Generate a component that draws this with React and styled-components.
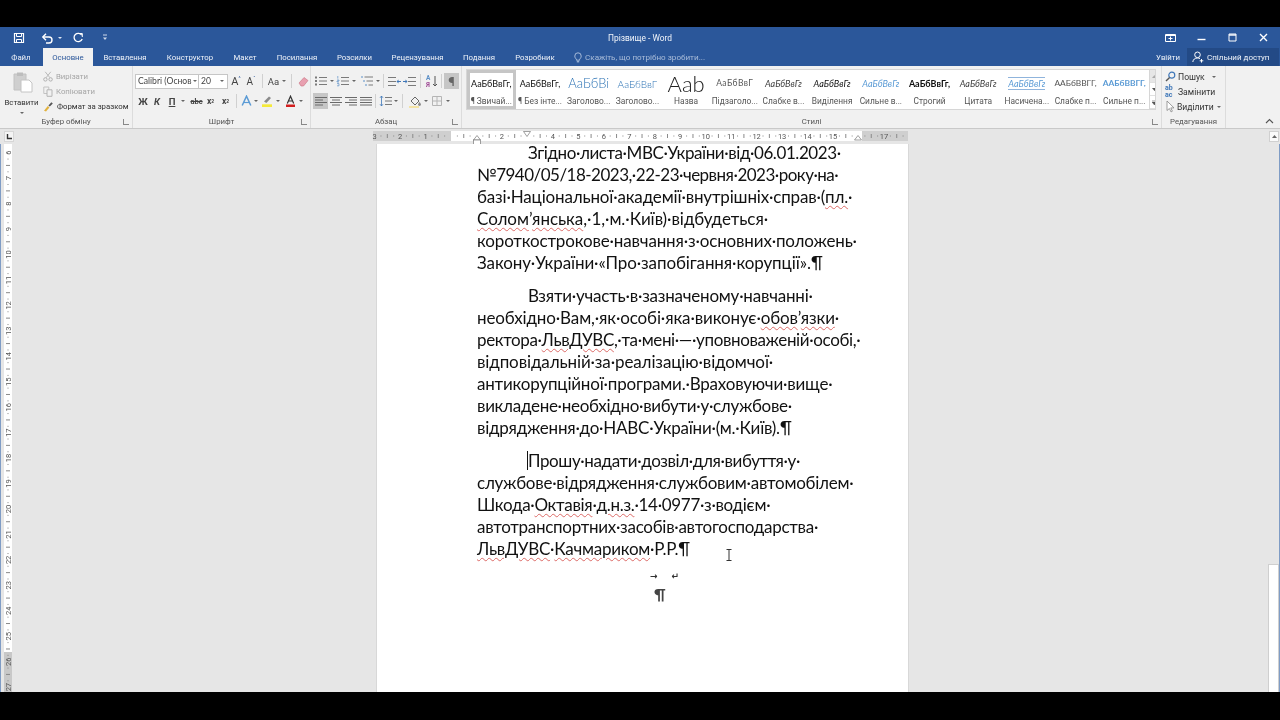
import React from 'react';
import styled, { createGlobalStyle } from 'styled-components';

const Global = createGlobalStyle`
  html, body { margin: 0; padding: 0; width: 1280px; height: 720px; overflow: hidden; background: #000; }
  * { box-sizing: border-box; }
  #root { width: 1280px; height: 720px; }
`;

const UI = `Roboto, "Open Sans", sans-serif`;
const DOC = `Lato, Carlito, "Open Sans", sans-serif`;

const Screen = styled.div`
  width: 1280px; height: 720px; display: flex; flex-direction: column; background: #000;
  font-family: ${UI}; position: relative; overflow: hidden; filter: blur(0.3px);
`;
const Letterbox = styled.div`height: ${p => p.$h}px; flex: none; background: #000;`;

/* Title bar */
const TitleBar = styled.div`
  height: 21px; flex: none; background: #2b579a; display: grid; grid-template-columns: 1fr auto 1fr; align-items: center; color: #fff;
`;
const Quick = styled.div`display: flex; align-items: center; padding-left: 12px;`;
const QuickBtn = styled.div`width: ${p => p.$w}px; display: flex; align-items: center; justify-content: center; margin-right: ${p => p.$mr || 0}px;`;
const Title = styled.div`font-size: 8.4px; color: #f0f4fa;`;
const WinBtns = styled.div`display: flex; justify-content: flex-end; padding-right: 1px;`;
const WinBtn = styled.div`width: 31px; display: flex; justify-content: center; align-items: center;`;

/* Tabs */
const TabBar = styled.div`
  height: 18px; flex: none; background: #2b579a; display: flex; align-items: stretch; color: #eef2f9; font-size: 7.8px;
`;
const Tab = styled.div`
  display: flex; align-items: center; justify-content: center; flex: none;
  width: ${p => p.$w}px; margin-left: ${p => p.$ml || 0}px;
  ${p => p.$active && `background: #f1f1f1; color: #2b579a;`}
`;
const TellMe = styled.div`display: flex; align-items: center; gap: 3px; margin-left: 19px; color: #a9bcd9; font-size: 8.1px;`;
const TabRight = styled.div`margin-left: auto; display: flex; align-items: stretch;`;
const SignIn = styled.div`display: flex; align-items: center; padding-right: 7px; color: #f0f4fa;`;
const Share = styled.div`
  width: 92px; background: #234a86; display: flex; align-items: center; gap: 3px; padding-left: 5px; color: #f0f4fa; margin-right: 1px; font-size: 8px;
`;

/* Ribbon */
const Ribbon = styled.div`
  height: 63px; flex: none; background: #f1f1f1; border-bottom: 1px solid #c9c9c9; display: flex; position: relative; color: #333; font-size: 7.8px;
`;
const Group = styled.div`
  width: ${p => p.$w}px; flex: none; display: flex; flex-direction: column; border-right: 1px solid #dcdcdc;
`;
const GroupBody = styled.div`height: 49px; flex: none; display: ${p => p.$flex ? 'flex' : 'block'};`;
const GroupFoot = styled.div`
  flex: 1; display: flex; align-items: center; justify-content: center; font-size: 7.8px; color: #555; position: relative;
`;
const Launcher = styled.span`
  position: absolute; right: 3px; top: 4px; width: 6px; height: 6px; border-left: 1px solid #888; border-bottom: 1px solid #888;
`;

/* Clipboard */
const PasteCol = styled.div`width: 43px; display: flex; flex-direction: column; align-items: center; padding-top: 5px;`;
const PasteArt = styled.div`margin-left: 3px;`;
const PasteLabel = styled.div`margin-top: 5px; line-height: 10px;`;
const Chevron = styled.span`
  display: inline-block; width: 0; height: 0; border-left: 2px solid transparent; border-right: 2px solid transparent; border-top: 2px solid ${p => p.$c || '#666'};
  flex: none; margin-left: ${p => p.$ml ?? 3}px;
`;
const ClipCol = styled.div`display: flex; flex-direction: column; padding-top: 3px;`;
const ClipRow = styled.div`
  height: 15px; display: flex; align-items: center; gap: 3px; color: ${p => p.$off ? '#a6a6a6' : '#333'}; white-space: nowrap;
`;

/* Rows */
const ToolRow = styled.div`display: flex; align-items: center; height: 20px; padding-left: ${p => p.$pl || 0}px;`;
const Stack = styled.div`display: flex; flex-direction: column; padding-top: ${p => p.$pt || 3}px;`;
const FieldBox = styled.div`
  height: 15px; width: ${p => p.$w}px; background: #fff; border: 1px solid #c6c6c6; margin-left: -1px; display: flex; align-items: center; justify-content: space-between;
  padding: 0 3px 0 2px; font-family: ${DOC}; font-size: 8.6px; color: #444; white-space: nowrap; overflow: hidden;
`;
const Tool = styled.div`
  width: ${p => p.$w || 14}px; height: ${p => p.$h || 16}px; flex: none; display: flex; align-items: center; justify-content: center; margin-left: ${p => p.$ml || 0}px;
  color: #444; font-size: ${p => p.$fs || 9}px; font-weight: ${p => p.$b ? 700 : 400}; font-style: ${p => p.$i ? 'italic' : 'normal'};
  text-decoration: ${p => p.$u ? 'underline' : 'none'};
  background: ${p => p.$on ? '#c6c6c6' : 'transparent'};
`;
const Divider = styled.div`width: 1px; height: 14px; background: #d0d0d0; margin: 0 ${p => p.$m ?? 3}px; flex: none;`;
const Spacer = styled.div`width: ${p => p.$w}px; flex: none;`;

/* Styles gallery */
const Gallery = styled.div`
  margin: 3px 0 0 4px; width: 690px; height: 41px; background: #fff; border: 1px solid #d6d6d6; display: flex; overflow: hidden;
`;
const StyleCard = styled.div`
  width: 48.7px; flex: none; display: flex; flex-direction: column; align-items: center; overflow: hidden;
  ${p => p.$sel && `outline: 3px solid #c6c6c6; outline-offset: -3px;`}
`;
const Preview = styled.div`
  height: 25px; display: flex; align-items: center; justify-content: center; white-space: nowrap; width: 100%; overflow: hidden; padding-top: 2px; line-height: 1;
  font-family: ${DOC}; font-size: ${p => p.$fs || 9}px; color: ${p => p.$c || '#111'}; font-weight: ${p => p.$b ? 700 : p.$w || 400};
  font-style: ${p => p.$i ? 'italic' : 'normal'}; letter-spacing: ${p => p.$ls || 0}px;
`;
const PreviewLine = styled.span`
  ${p => p.$ruled && `border-top: 1px solid #8fb4dc; border-bottom: 1px solid #8fb4dc; padding: 1px 0;`}
`;
const StyleName = styled.div`font-size: 8.4px; color: #555; white-space: nowrap; line-height: 12px;`;
const GalleryScroll = styled.div`width: 10px; flex: none; margin-left: auto; border-left: 1px solid #d6d6d6; display: flex; flex-direction: column; background: #fff;`;
const ScrollCell = styled.div`flex: 1; display: flex; align-items: center; justify-content: center; border-bottom: 1px solid #e0e0e0; background: ${p => p.$off ? '#e6e6e6' : '#fff'};`;
const Collapse = styled.div`position: absolute; right: 6px; bottom: 0px; height: 14px; display: flex; align-items: center;`;

/* Editing */
const EditRow = styled.div`height: 15px; display: flex; align-items: center; gap: 2px; color: #333; padding-left: 3px; white-space: nowrap; font-size: 8.6px;`;

/* Ruler row */
const RulerBar = styled.div`height: 15px; flex: none; background: #e6e6e6; position: relative; display: flex; align-items: center;`;
const Corner = styled.div`
  width: 10px; height: 11px; margin-left: 4px; background: #f4f4f4; border: 1px solid #d6d6d6; display: flex; align-items: center; justify-content: center;
`;

/* Work area */
const Work = styled.div`flex: 1; min-height: 0; display: flex; background: #e6e6e6; position: relative; border-left: 1px solid #7f9cc5; border-right: 1px solid #7f9cc5;`;
const VRuler = styled.div`width: 375px; flex: none; padding-left: 3px;`;
const Page = styled.div`
  width: 533px; flex: none; background: #fff; border-left: 1px solid #d8d8d8; border-right: 1px solid #d8d8d8; padding-left: 100px;
  color: #111; font-family: ${DOC}; font-size: 17px; line-height: 22.05px; white-space: nowrap;
`;
const Para = styled.div`margin-bottom: 11px;`;
const Line = styled.div`
  height: ${p => p.$first ? 19.6 : 22.05}px; line-height: ${p => p.$first ? 17 : 22.05}px;
  letter-spacing: ${p => p.$ls || 0}px; padding-left: ${p => p.$indent ? 51 : 0}px; position: relative;
`;
const Wavy = styled.span`text-decoration: underline wavy #dc6a66 1px; text-underline-offset: 2px;`;
const Caret = styled.span`position: absolute; left: 50px; top: 1px; width: 1px; height: 19px; background: #111;`;
const Marks = styled.div`
  display: flex; flex-direction: column; align-items: flex-start; margin-left: 173px; margin-top: -2px;
`;
const MarkGlyphs = styled.div`display: flex; gap: 14px; height: 14px; font-size: 9px; font-weight: 700; line-height: 14px; color: #333; font-family: "DejaVu Sans", sans-serif; letter-spacing: 0;`;
const Pilcrow = styled.div`font-size: 16px; line-height: 22px; color: #444; font-weight: 700; margin-left: 4px;`;
const Side = styled.div`flex: 1;`;
const ScrollBar = styled.div`width: 11px; flex: none; display: flex; flex-direction: column; justify-content: flex-end; background: #e6e6e6;`;
const Thumb = styled.div`height: 128px; background: #fff; border: 1px solid #cfcfcf; border-bottom: 0;`;
const IBeam = styled.div`position: absolute; left: 724px; top: 405px; width: 8px; height: 12px;`;
const ScrollUp = styled.div`
  position: absolute; right: 1px; top: 2px; width: 10px; height: 11px; background: #fafafa; border: 1px solid #d0d0d0; display: flex; align-items: center; justify-content: center;
`;

/* Icons */
const Ic = ({ w = 12, h = 12, vb, children, style }) => (
  <svg width={w} height={h} viewBox={vb || `0 0 ${w} ${h}`} style={{ display: 'block', flex: 'none', ...style }} fill="none">{children}</svg>
);
const SaveIcon = () => <Ic><path d="M1.5 1.5h9v9h-9z" stroke="#fff" strokeWidth="1.2" /><path d="M3.5 1.5v3h5v-3M3.5 10.5v-3h5v3" stroke="#fff" /></Ic>;
const UndoIcon = () => <Ic w={13}><path d="M2 5h6a3 3 0 0 1 0 6H5" stroke="#fff" strokeWidth="1.4" /><path d="M5 1.8 1.8 5 5 8.2" stroke="#fff" strokeWidth="1.4" /></Ic>;
const RedoIcon = () => <Ic><path d="M9.8 3.2A4.2 4.2 0 1 0 10.2 7" stroke="#fff" strokeWidth="1.3" /><path d="M6.5 1.5h3.8v3.5" stroke="#fff" /></Ic>;
const QuickMore = () => <Ic w={6} h={7}><path d="M1 1h4" stroke="#cfd9ea" /><path d="M1 3.5h4L3 6z" fill="#cfd9ea" /></Ic>;
const RestoreRibbon = () => <Ic w={11} h={10}><path d="M.5 1.5h10v7H.5z" stroke="#fff" /><path d="M.5 2.5h10" stroke="#fff" /><path d="M5.5 3.5v4M3.5 5.5h4" stroke="#fff" /></Ic>;
const MinIcon = () => <Ic w={9} h={9}><path d="M.5 6.5h8" stroke="#fff" strokeWidth="1.4" /></Ic>;
const MaxIcon = () => <Ic w={9} h={9}><path d="M1 1h7v7H1z" stroke="#fff" /><path d="M1 2h7" stroke="#fff" strokeWidth="1.4" /></Ic>;
const CloseIcon = () => <Ic w={9} h={9}><path d="M1 1l7 7M8 1 1 8" stroke="#fff" strokeWidth="1.4" /></Ic>;
const Bulb = () => <Ic w={8} h={11}><path d="M2.4 7.2C1.4 6.2.8 5.4.8 4a3.2 3.2 0 0 1 6.4 0c0 1.4-.6 2.2-1.6 3.2v1H2.4z" stroke="#c5d3e8" strokeWidth=".8" /><path d="M2.8 9.8h2.4" stroke="#c5d3e8" /></Ic>;
const PersonIcon = () => <Ic w={12} h={12}><circle cx="5.5" cy="3.8" r="2.8" stroke="#fff" /><path d="M.8 11c.4-2.6 2-4 4.7-4 1 0 1.8.2 2.5.6" stroke="#fff" /><path d="M9.5 8v3.6M7.7 9.8h3.6" stroke="#fff" /></Ic>;
const PasteIcon = () => (
  <Ic w={20} h={22}>
    <path d="M1 3h12v16H1z" fill="#cfcfcf" stroke="#c2c2c2" />
    <path d="M4 1.5h6v3.5H4z" fill="#bdbdbd" />
    <path d="M8 9h8l3 3v9H8z" fill="#fff" stroke="#c4c4c4" />
  </Ic>
);
const ScissorsIcon = () => <Ic w={10} h={11}><circle cx="2.4" cy="8.4" r="1.7" stroke="#b0b0b0" /><circle cx="7.6" cy="8.4" r="1.7" stroke="#b0b0b0" /><path d="M3 6.8 7.8 .8M7 6.8 2.2 .8" stroke="#b9b9b9" /></Ic>;
const CopyIcon = () => <Ic w={10} h={11}><path d="M.8 1h5v6.5h-5z" stroke="#c2c2c2" /><path d="M4 3.8h5v6.5H4z" fill="#f1f1f1" stroke="#b5b5b5" /></Ic>;
const BrushIcon = () => <Ic w={11} h={11}><path d="M1 9.8 4.8 5l1.6 1.4L3 10.6z" fill="#e2b23d" /><path d="M5.4 4.4 8.4 1.2l1.4 1.2-3 3.2z" fill="#555" /></Ic>;
const GrowWrap = styled.span`display: flex; align-items: flex-start;`;
const GrowA = styled.span`font-size: ${p => p.$up ? 11 : 10}px; line-height: 13px;`;
const GrowMark = styled.span`font-size: 5px; line-height: 7px; color: #2b579a;`;
const Grow = ({ up }) => <GrowWrap><GrowA $up={up}>A</GrowA><GrowMark>{up ? '^' : 'ˇ'}</GrowMark></GrowWrap>;
const Eraser = () => <Ic w={11} h={11}><path d="M1 7 6 1.5l4 3L5.5 10H3z" fill="#e8a0b0" stroke="#c9707f" strokeWidth=".6" /></Ic>;
const TextFx = () => <Ic w={11} h={12}><path d="M1.2 10.5 5.5 1.2l4.3 9.3" stroke="#5b9bd5" strokeWidth="1.5" /><path d="M3 7.5h5" stroke="#5b9bd5" strokeWidth="1.2" /></Ic>;
const Highlight = () => <Ic w={12} h={12}><path d="M3 6.5 8 1.5l2 1.6-4.6 5z" fill="#8a8a8a" /><path d="M1 9.3h10V12H1z" fill="#f5ea3a" /></Ic>;
const FontColor = () => <Ic w={11} h={12}><path d="M2.3 8.6 5.5 1.2l3.2 7.4M3.4 6h4.2" stroke="#333" strokeWidth="1.2" /><path d="M1 9.5h9V12H1z" fill="#d21f1f" /></Ic>;
const Bullets = () => <Ic w={14} h={12}><g fill="#7a7a7a"><path d="M1 1.5h2v2H1zM1 5h2v2H1zM1 8.5h2v2H1z" /></g><path d="M5 2.5h8M5 6h8M5 9.5h8" stroke="#7a7a7a" /></Ic>;
const Numbered = () => <Ic w={14} h={12}><path d="M1.8 1v2.6M1 5h2v1H1v1h2M1 8.6h2v2.2H1" stroke="#5b8fc7" strokeWidth=".7" /><path d="M5 2.5h8M5 6h8M5 9.5h8" stroke="#7a7a7a" /></Ic>;
const MultiList = () => <Ic w={14} h={12}><path d="M1 2h2M3 6h2M5 10h2" stroke="#5b8fc7" /><path d="M4.5 2h8.5M6.5 6h6.5M8.5 10h4.5" stroke="#7a7a7a" /></Ic>;
const IndentIcon = ({ flip }) => <Ic w={13} h={11} style={flip ? { transform: 'scaleX(-1)' } : undefined}><path d="M5 1.5h8M5 5.5h8M5 9.5h8" stroke="#7a7a7a" /><path d="M0 5.5h3" stroke="#3f77b8" /><path d="M2.5 3.5 4.5 5.5l-2 2z" fill="#3f77b8" /></Ic>;
const SortIcon = () => <Ic w={12} h={14}><text x="0" y="6" fontSize="6.5" fill="#5b8fc7" fontFamily="Roboto" fontWeight="700">А</text><text x="0" y="13" fontSize="6.5" fill="#a04c96" fontFamily="Roboto" fontWeight="700">Я</text><path d="M9 2v10M7 10l2 2 2-2" stroke="#555" /></Ic>;
const AlignIcon = ({ kind }) => {
  const lines = [[1, 13], [1, 9], [1, 13], [1, 9]].map(([a, b], i) => {
    if (kind === 'center') return i % 2 ? [3, 11] : [1, 13];
    if (kind === 'right') return i % 2 ? [5, 13] : [1, 13];
    if (kind === 'just') return [1, 13];
    return [a, b];
  });
  return <Ic w={14} h={12}>{lines.map(([a, b], i) => <path key={i} d={`M${a} ${2.5 + i * 2.5}H${b}`} stroke="#6a6a6a" />)}</Ic>;
};
const Spacing = () => <Ic w={14} h={12}><path d="M6 2.5h7M6 6h7M6 9.5h7" stroke="#7a7a7a" /><path d="M2.5 1v10M1 2.8 2.5 1 4 2.8M1 9.2 2.5 11 4 9.2" stroke="#3f77b8" strokeWidth=".8" /></Ic>;
const Shading = () => <Ic w={15} h={13}><path d="M3 6 7 2l4 4-4 4z" stroke="#666" /><path d="M11.5 7c1 1.2 1.4 2 1.4 2.6a1.4 1.4 0 0 1-2.8 0c0-.6.4-1.4 1.4-2.6z" fill="#888" /><path d="M1 11h10v2H1z" fill="#f3e3a6" /></Ic>;
const Borders = () => <Ic w={12} h={12}><path d="M1.5 1.5h9v9h-9zM6 1.5v9M1.5 6h9" stroke="#b5b5b5" /></Ic>;
const PilcMark = styled.span`font-size: 13px; color: #666; font-weight: 700;`;
const SearchIcon = () => <Ic w={11} h={11}><circle cx="6.8" cy="4.2" r="3" stroke="#3f77b8" strokeWidth="1.2" /><path d="M4.6 6.4 1 10" stroke="#555" strokeWidth="1.4" /></Ic>;
const ReplaceMark = styled.span`font-size: 7px; line-height: 6.5px; color: #3f77b8; font-weight: 700; width: 11px; display: block;`;
const PointerIcon = () => <Ic w={10} h={13}><path d="M2 1v9.5l2.4-2 1.6 3.4 1.4-.7-1.6-3.3H9z" stroke="#888" strokeWidth=".8" fill="#fff" /></Ic>;
const UpChevron = () => <Ic w={9} h={6}><path d="M1 5 4.5 1.5 8 5" stroke="#555" strokeWidth="1.1" /></Ic>;
const PasteChevron = styled(Chevron)`margin-top: 4px;`;

const Hruler = () => {
  const ox = 78; /* x of 0 inside this svg (451 on the page) */
  const step = 25.47;
  const items = [];
  for (let i = -3; i <= 17; i++) {
    const x = ox + i * step;
    if (i !== 0 && i !== 1 && i !== 16 && i !== 3) items.push(<text key={i} x={x} y="9.8" fontSize="7.5" fill="#555" textAnchor="middle" fontFamily="Roboto">{Math.abs(i)}</text>);
    [0.25, 0.5, 0.75].forEach((f, k) => {
      const px = x + f * step;
      if (px < 535) items.push(<rect key={`${i}-${k}`} x={px - 0.5} y={k === 1 ? 5 : 6.5} width="1" height={k === 1 ? 4 : 1} fill="#8a8a8a" />);
    });
  }
  return (
    <svg width="536" height="15" style={{ position: 'absolute', left: 373, top: 0, overflow: 'visible' }}>
      <rect x="0" y="2" width="78" height="10" fill="#cfcfcf" />
      <rect x="78" y="2" width="411" height="10" fill="#fff" />
      <rect x="489" y="2" width="46" height="10" fill="#cfcfcf" />
      {items}
      <path d="M104 6.5 100.5 11h7z" fill="#fff" stroke="#777" strokeWidth=".7" />
      <rect x="100.5" y="11" width="7" height="5" fill="#fff" stroke="#777" strokeWidth=".7" />
      <path d="M154 7.5 150.5 2.5h7z" fill="#fff" stroke="#777" strokeWidth=".7" />
      <path d="M485 6.5 481.5 11h7z" fill="#fff" stroke="#777" strokeWidth=".7" />
    </svg>
  );
};

const Vruler = () => {
  const items = [];
  for (let n = 6; n <= 27; n++) {
    const y = 8.7 + (n - 6) * 25.45;
    items.push(<text key={n} x={0} y={0} fontSize="7.5" fill="#555" textAnchor="middle" fontFamily="Roboto" transform={`translate(6.8 ${y}) rotate(-90)`}>{n}</text>);
    [0.25, 0.5, 0.75].forEach((f, k) => {
      const py = y + f * 25.45;
      items.push(<rect key={`${n}-${k}`} x={k === 1 ? 2 : 3.5} y={py - 0.5} width={k === 1 ? 4 : 1} height="1" fill="#8a8a8a" />);
    });
  }
  return (
    <svg width="9" height="548" style={{ display: 'block' }}>
      <rect x="0" width="8" height="508" fill="#fff" />
      <rect x="0" y="508" width="8" height="40" fill="#c8c8c8" />
      {items}
    </svg>
  );
};

const TABS = [
  ['Вставлення', 42, 11], ['Конструктор', 48, 20], ['Макет', 22, 20], ['Посилання', 42, 20],
  ['Розсилки', 35, 19], ['Рецензування', 51, 20], ['Подання', 32, 20], ['Розробник', 40, 20],
];

const STYLES = [
  { p: 'АаБбВвГг,', n: '¶ Звичай...', sel: true },
  { p: 'АаБбВвГг,', n: '¶ Без інте...' },
  { p: 'АаБбВі', n: 'Заголово...', c: '#2e74b5', fs: 13, w: 300 },
  { p: 'АаБбВвГ', n: 'Заголово...', c: '#2e74b5', fs: 10, w: 300 },
  { p: 'Ааb', n: 'Назва', fs: 22, c: '#222', w: 300 },
  { p: 'АаБбВвГ', n: 'Підзаголо...', c: '#595959', ls: .4, fs: 8.5 },
  { p: 'АаБбВвГг', n: 'Слабке в...', c: '#404040', i: true },
  { p: 'АаБбВвГг', n: 'Виділення', i: true },
  { p: 'АаБбВвГг', n: 'Сильне в...', c: '#5b9bd5', i: true },
  { p: 'АаБбВвГг,', n: 'Строгий', b: true },
  { p: 'АаБбВвГг', n: 'Цитата', c: '#404040', i: true },
  { p: 'АаБбВвГг', n: 'Насичена...', c: '#5b9bd5', i: true, ruled: true },
  { p: 'ААБбВВГГ,', n: 'Слабке п...', c: '#555', fs: 8.4 },
  { p: 'ААБбВВГГ,', n: 'Сильне п...', c: '#5b9bd5', b: true, fs: 8.4 },
];

const W = ({ children }) => <Wavy>{children}</Wavy>;

export default function App() {
  return (
    <Screen>
      <Global />
      <Letterbox $h={27} />
      <TitleBar>
        <Quick>
          <QuickBtn $w={14} $mr={15}><SaveIcon /></QuickBtn>
          <QuickBtn $w={13}><UndoIcon /></QuickBtn>
          <QuickBtn $w={11} $mr={6}><Chevron $c="#dfe7f3" $ml={0} /></QuickBtn>
          <QuickBtn $w={14} $mr={17}><RedoIcon /></QuickBtn>
          <QuickBtn $w={6}><QuickMore /></QuickBtn>
        </Quick>
        <Title>Прізвище - Word</Title>
        <WinBtns>
          <WinBtn><RestoreRibbon /></WinBtn>
          <WinBtn><MinIcon /></WinBtn>
          <WinBtn><MaxIcon /></WinBtn>
          <WinBtn><CloseIcon /></WinBtn>
        </WinBtns>
      </TitleBar>
      <TabBar>
        <Tab $w={42}>Файл</Tab>
        <Tab $w={50} $ml={1} $active>Основне</Tab>
        {TABS.map(([t, w, ml]) => <Tab key={t} $w={w} $ml={ml}>{t}</Tab>)}
        <TellMe><Bulb />Скажіть, що потрібно зробити...</TellMe>
        <TabRight>
          <SignIn>Увійти</SignIn>
          <Share><PersonIcon />Спільний доступ</Share>
        </TabRight>
      </TabBar>
      <Ribbon>
        <Group $w={133}>
          <GroupBody $flex>
            <PasteCol>
              <PasteArt><PasteIcon /></PasteArt>
              <PasteLabel>Вставити</PasteLabel>
              <PasteChevron $ml={0} />
            </PasteCol>
            <ClipCol>
              <ClipRow $off><ScissorsIcon />Вирізати</ClipRow>
              <ClipRow $off><CopyIcon />Копіювати</ClipRow>
              <ClipRow><BrushIcon />Формат за зразком</ClipRow>
            </ClipCol>
          </GroupBody>
          <GroupFoot>Буфер обміну<Launcher /></GroupFoot>
        </Group>
        <Group $w={178}>
          <GroupBody>
            <Stack $pt={5}>
              <ToolRow $pl={3}>
                <FieldBox $w={64}>Calibri (Основ<Chevron $ml={1} /></FieldBox>
                <FieldBox $w={30}>20<Chevron $ml={1} /></FieldBox>
                <Tool $w={16}><Grow up /></Tool>
                <Tool $w={14}><Grow /></Tool>
                <Divider $m={4} />
                <Tool $w={13} $fs={9.5}>Aa</Tool><Chevron $ml={2} />
                <Divider $m={5} />
                <Tool $w={13}><Eraser /></Tool>
              </ToolRow>
              <ToolRow $pl={3}>
                <Tool $b $fs={9.5}>Ж</Tool>
                <Tool $b $i $fs={9.5}>К</Tool>
                <Tool $b $u $fs={9.5} $w={16}>П</Tool><Chevron $ml={1} />
                <Tool $w={15} $fs={7.5} $b $ml={4}><s>abc</s></Tool>
                <Tool $fs={8.5} $b $w={13}>x<sub style={{ fontSize: 5 }}>2</sub></Tool>
                <Tool $fs={8.5} $b $w={17}>x<sup style={{ fontSize: 5 }}>2</sup></Tool>
                <Divider $m={2} />
                <Tool $w={14}><TextFx /></Tool><Chevron $ml={1} />
                <Tool $w={16} $ml={1}><Highlight /></Tool><Chevron $ml={1} />
                <Tool $w={16} $ml={2}><FontColor /></Tool><Chevron $ml={1} />
              </ToolRow>
            </Stack>
          </GroupBody>
          <GroupFoot>Шрифт<Launcher /></GroupFoot>
        </Group>
        <Group $w={151}>
          <GroupBody>
            <Stack $pt={5}>
              <ToolRow $pl={2}>
                <Tool $w={16}><Bullets /></Tool><Chevron $ml={1} />
                <Tool $w={16} $ml={1}><Numbered /></Tool><Chevron $ml={1} />
                <Tool $w={16} $ml={3}><MultiList /></Tool><Chevron $ml={1} />
                <Divider $m={3} />
                <Tool $w={15}><IndentIcon flip /></Tool>
                <Tool $w={15}><IndentIcon /></Tool>
                <Divider $m={3} />
                <Tool $w={15}><SortIcon /></Tool>
                <Divider $m={2} />
                <Tool $w={15} $h={16} $on><PilcMark>¶</PilcMark></Tool>
              </ToolRow>
              <ToolRow $pl={2}>
                <Tool $w={15} $on><AlignIcon /></Tool>
                <Tool $w={15}><AlignIcon kind="center" /></Tool>
                <Tool $w={15}><AlignIcon kind="right" /></Tool>
                <Tool $w={15}><AlignIcon kind="just" /></Tool>
                <Divider $m={2} />
                <Tool $w={16}><Spacing /></Tool><Chevron $ml={0} />
                <Divider $m={4} />
                <Tool $w={17}><Shading /></Tool><Chevron $ml={0} />
                <Spacer $w={1} />
                <Tool $w={15}><Borders /></Tool><Chevron $ml={2} />
              </ToolRow>
            </Stack>
          </GroupBody>
          <GroupFoot>Абзац<Launcher /></GroupFoot>
        </Group>
        <Group $w={700}>
          <GroupBody>
            <Gallery>
              {STYLES.map(s => (
                <StyleCard key={s.n + s.p + (s.c || '')} $sel={s.sel}>
                  <Preview $fs={s.fs} $c={s.c} $b={s.b} $i={s.i} $ls={s.ls} $w={s.w}><PreviewLine $ruled={s.ruled}>{s.p}</PreviewLine></Preview>
                  <StyleName>{s.n}</StyleName>
                </StyleCard>
              ))}
              <GalleryScroll>
                <ScrollCell $off><Ic w={5} h={3}><path d="M0 3 2.5 0 5 3z" fill="#aaa" /></Ic></ScrollCell>
                <ScrollCell><Ic w={5} h={3}><path d="M0 0 2.5 3 5 0z" fill="#555" /></Ic></ScrollCell>
                <ScrollCell><Ic w={5} h={5}><path d="M0 0h5M0 2 2.5 5 5 2z" stroke="#555" strokeWidth=".6" fill="#555" /></Ic></ScrollCell>
              </GalleryScroll>
            </Gallery>
          </GroupBody>
          <GroupFoot>Стилі<Launcher /></GroupFoot>
        </Group>
        <Group $w={64}>
          <GroupBody>
            <Stack $pt={3}>
              <EditRow><SearchIcon />Пошук<Chevron $ml={5} /></EditRow>
              <EditRow><ReplaceMark>ab<br />ac</ReplaceMark>Замінити</EditRow>
              <EditRow><PointerIcon />Виділити<Chevron $ml={1} /></EditRow>
            </Stack>
          </GroupBody>
          <GroupFoot>Редагування</GroupFoot>
        </Group>
        <Collapse><UpChevron /></Collapse>
      </Ribbon>
      <RulerBar>
        <Corner><Ic w={6} h={6}><path d="M1.5 0v4.5H6" stroke="#333" strokeWidth="1.4" /></Ic></Corner>
        <Hruler />
        <ScrollUp><Ic w={5} h={3}><path d="M0 3 2.5 0 5 3z" fill="#666" /></Ic></ScrollUp>
      </RulerBar>
      <Work>
        <VRuler><Vruler /></VRuler>
        <Page>
          <Para>
            <Line $first $indent $ls={-0.42}>Згідно·листа·МВС·України·від·06.01.2023·</Line>
            <Line $ls={-0.51}>№7940/05/18-2023,·22-23·червня·2023·року·на·</Line>
            <Line $ls={-0.17}>базі·Національної·академії·внутрішніх·справ·(<W>пл.</W>·</Line>
            <Line $ls={-0.05}><W>Солом</W>’<W>янська</W>,·1,·м.·Київ)·відбудеться·</Line>
            <Line $ls={-0.16}>короткострокове·навчання·з·основних·положень·</Line>
            <Line $ls={-0.11}>Закону·України·«Про·запобігання·корупції».¶</Line>
          </Para>
          <Para>
            <Line $indent $ls={-0.22}>Взяти·участь·в·зазначеному·навчанні·</Line>
            <Line $ls={-0.13}>необхідно·Вам,·як·особі·яка·виконує·<W>обов</W>’<W>язки</W>·</Line>
            <Line $ls={-0.37}>ректора·<W>ЛьвДУВС</W>,·та·мені·—·уповноваженій·особі,·</Line>
            <Line $ls={-0.12}>відповідальній·за·реалізацію·відомчої·</Line>
            <Line $ls={-0.2}>антикорупційної·програми.·Враховуючи·вище·</Line>
            <Line $ls={-0.3}>викладене·необхідно·вибути·у·службове·</Line>
            <Line $ls={-0.23}>відрядження·до·НАВС·України·(м.·Київ).¶</Line>
          </Para>
          <Para>
            <Line $indent $ls={-0.39}><Caret />Прошу·надати·дозвіл·для·вибуття·у·</Line>
            <Line $ls={-0.24}>службове·відрядження·службовим·автомобілем·</Line>
            <Line $ls={-0.31}>Шкода·<W>Октавія</W>·<W>д.н.з.</W>·14·0977·з·водієм·</Line>
            <Line $ls={-0.28}>автотранспортних·засобів·автогосподарства·</Line>
            <Line $ls={-0.25}><W>ЛьвДУВС</W>·<W>Качмариком</W>·Р.Р.¶</Line>
          </Para>
          <Marks>
            <MarkGlyphs><span>→</span><span>↵</span></MarkGlyphs>
            <Pilcrow>¶</Pilcrow>
          </Marks>
        </Page>
        <Side />
        <ScrollBar><Thumb /></ScrollBar>
        <IBeam>
          <Ic w={8} h={12}><path d="M1.5.5h5M1.5 11.5h5M4 .5v11" stroke="#333" /></Ic>
        </IBeam>
      </Work>
      <Letterbox $h={28} />
    </Screen>
  );
}
